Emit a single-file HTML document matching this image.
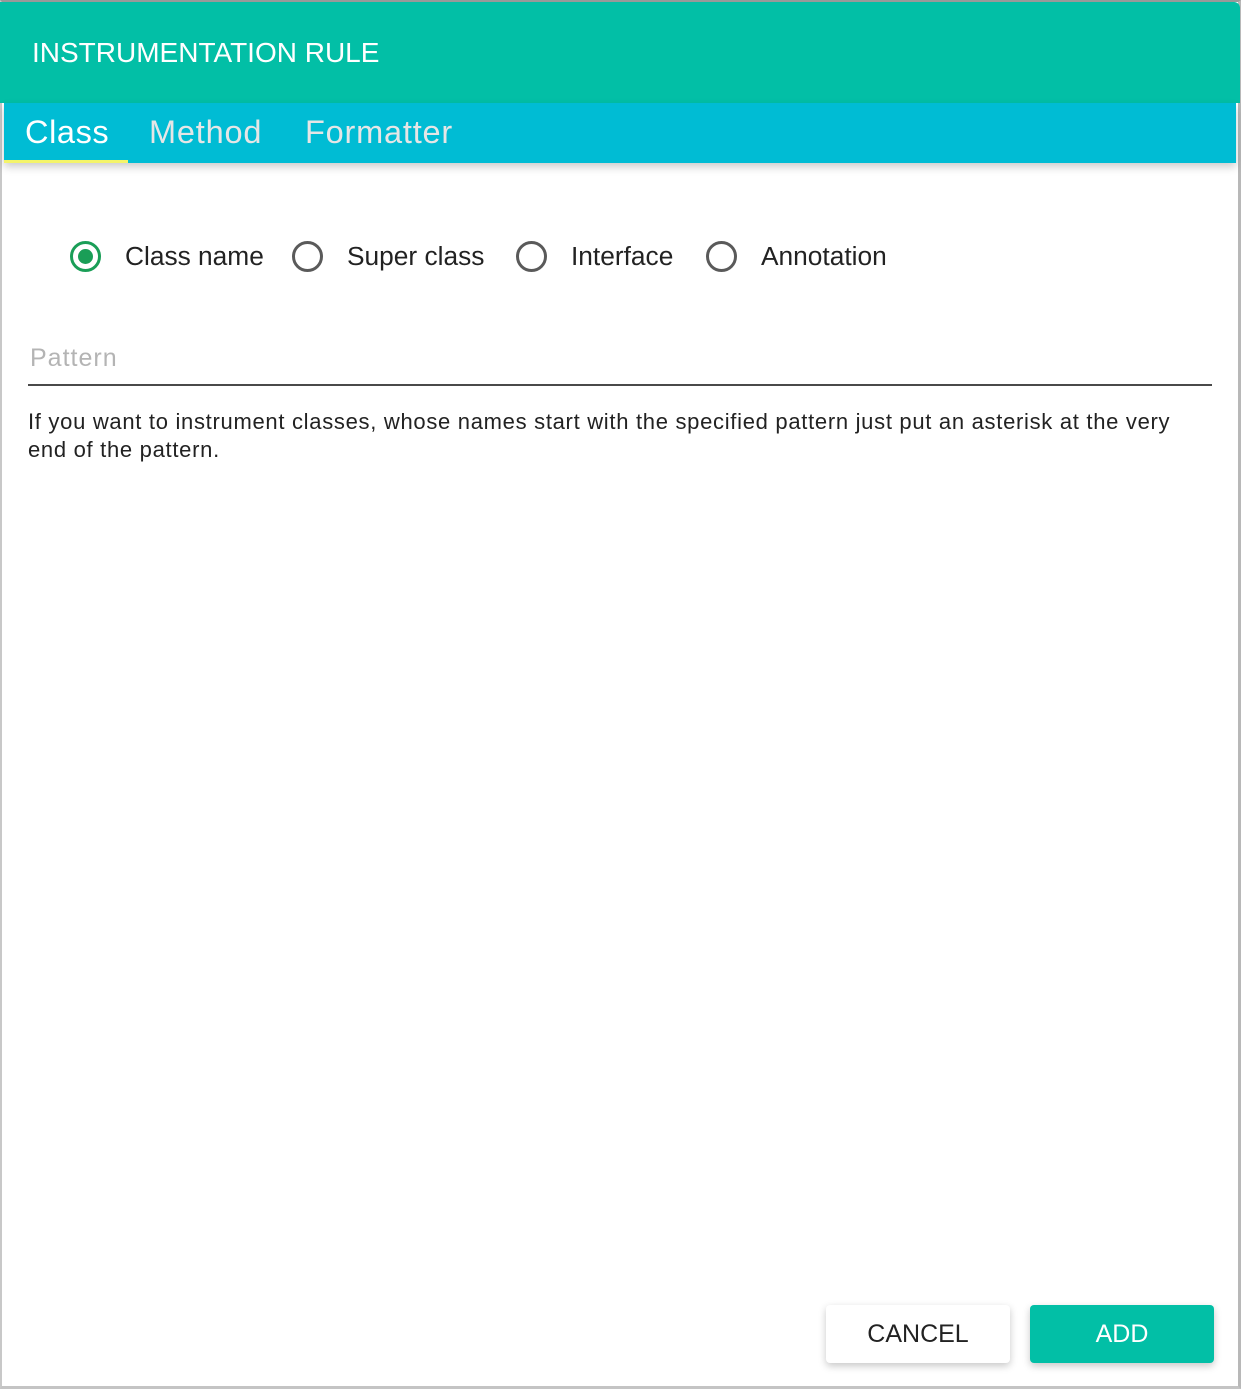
<!DOCTYPE html>
<html><head><meta charset="utf-8"><style>
*{margin:0;padding:0;box-sizing:border-box}
html,body{width:1241px;height:1389px;overflow:hidden;background:#fff;font-family:"Liberation Sans",sans-serif}
.a{position:absolute;white-space:nowrap}
.frame{position:absolute;left:0;top:0;width:1241px;height:1389px;border-left:2px solid #c8c8c8;border-right:3px solid #b8b8b8;border-bottom:3px solid #c4c4c4;border-top:2px solid #999}
.hdr{position:absolute;left:0;top:2px;width:1240px;height:101px;background:#02bfa6;border-top-right-radius:6px}
.tabs{position:absolute;left:4px;top:103px;width:1232px;height:60px;background:#00bcd4;box-shadow:0 4px 8px rgba(0,0,0,.2)}
.radio{position:absolute;width:31px;height:31px;border:3.5px solid #5a5a5a;border-radius:50%}
.lbl{font-size:26.3px;color:#222;top:241px}
.btn{position:absolute;top:1305px;width:184px;height:58px;border-radius:4px;font-size:25px;text-align:center;line-height:58px;box-shadow:0 3px 8px rgba(0,0,0,.22)}
</style></head><body>
<div class="frame"></div>
<div class="hdr"></div>
<div class="a" style="left:32px;top:37px;font-size:28px;color:#fff">INSTRUMENTATION RULE</div>
<div class="tabs"></div>
<div class="a" style="left:25px;top:114px;font-size:32.5px;letter-spacing:0.6px;color:#fff">Class</div>
<div class="a" style="left:149px;top:114px;font-size:32.5px;letter-spacing:0.8px;color:#e6e6e6">Method</div>
<div class="a" style="left:305px;top:114px;font-size:32.5px;letter-spacing:0.8px;color:#e6e6e6">Formatter</div>
<div style="position:absolute;left:4px;top:160px;width:124px;height:3px;background:#f4f46a"></div>

<div class="radio" style="left:70px;top:241px;border-color:#1a9e57"><div style="position:absolute;left:4.5px;top:4.5px;width:15px;height:15px;border-radius:50%;background:#1a9e57"></div></div>
<div class="a lbl" style="left:125px">Class name</div>
<div class="radio" style="left:292px;top:241px"></div>
<div class="a lbl" style="left:347px">Super class</div>
<div class="radio" style="left:516px;top:241px"></div>
<div class="a lbl" style="left:571px">Interface</div>
<div class="radio" style="left:706px;top:241px"></div>
<div class="a lbl" style="left:761px">Annotation</div>

<div class="a" style="left:30px;top:344px;font-size:25px;letter-spacing:1px;color:#b4b4b4">Pattern</div>
<div style="position:absolute;left:28px;top:384px;width:1184px;height:2px;background:#4a4a4a"></div>
<div class="a" style="left:28px;top:408px;font-size:22px;letter-spacing:0.7px;color:#222;line-height:28px">If you want to instrument classes, whose names start with the specified pattern just put an asterisk at the very<br>end of the pattern.</div>

<div class="btn" style="left:826px;background:#fff;color:#222">CANCEL</div>
<div class="btn" style="left:1030px;background:#02bfa6;color:#fff">ADD</div>
</body></html>
